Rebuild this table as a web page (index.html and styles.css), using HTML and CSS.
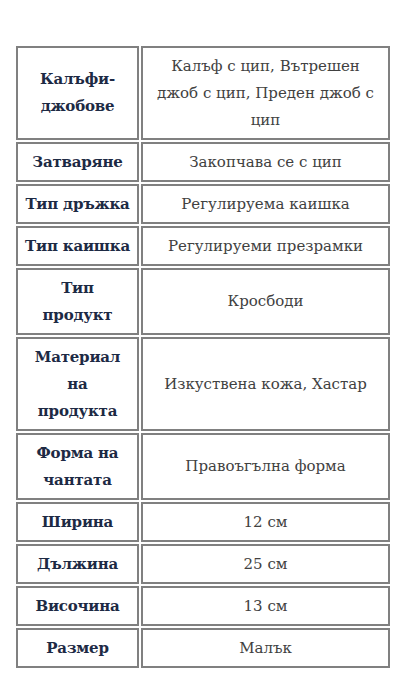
FILE: index.html
```html
<!DOCTYPE html>
<html lang="bg">
<head>
<meta charset="utf-8">
<link rel="stylesheet" href="styles.css">
</head>
<body>
<div class="wrap">
<table class="specs">
<colgroup><col class="c1"><col class="c2"></colgroup>
<tbody>
<tr><th>Калъфи-<br>джобове</th><td>Калъф с цип, Вътрешен<br>джоб с цип, Преден джоб с<br>цип</td></tr>
<tr><th>Затваряне</th><td>Закопчава се с цип</td></tr>
<tr><th>Тип дръжка</th><td>Регулируема каишка</td></tr>
<tr><th>Тип каишка</th><td>Регулируеми презрамки</td></tr>
<tr><th>Тип<br>продукт</th><td>Кросбоди</td></tr>
<tr><th>Материал<br>на<br>продукта</th><td>Изкуствена кожа, Хастар</td></tr>
<tr><th>Форма на<br>чантата</th><td>Правоъгълна форма</td></tr>
<tr><th>Ширина</th><td>12 см</td></tr>
<tr><th>Дължина</th><td>25 см</td></tr>
<tr><th>Височина</th><td>13 см</td></tr>
<tr><th>Размер</th><td>Малък</td></tr>
</tbody>
</table>
</div>
</body>
</html>
```
FILE: styles.css
```css
html, body {
  margin: 0;
  padding: 0;
  background: #ffffff;
}
.wrap {
  padding: 44px 0 0 14px;
}
.specs {
  border-collapse: separate;
  border-spacing: 2px;
  table-layout: fixed;
  width: 378px;
  font-family: "DejaVu Serif", "Liberation Serif", serif;
  font-size: 15px;
  line-height: 27px;
}
.c1 { width: 123px; }
.c2 { width: 249px; }
.specs th,
.specs td {
  border: 2px solid #808080;
  padding: 4.5px 4px;
  text-align: center;
  vertical-align: middle;
  white-space: nowrap;
}
.specs th {
  color: #1d2a44;
  font-weight: bold;
  letter-spacing: -0.2px;
}
.specs td {
  color: #414141;
  font-weight: normal;
}
```
